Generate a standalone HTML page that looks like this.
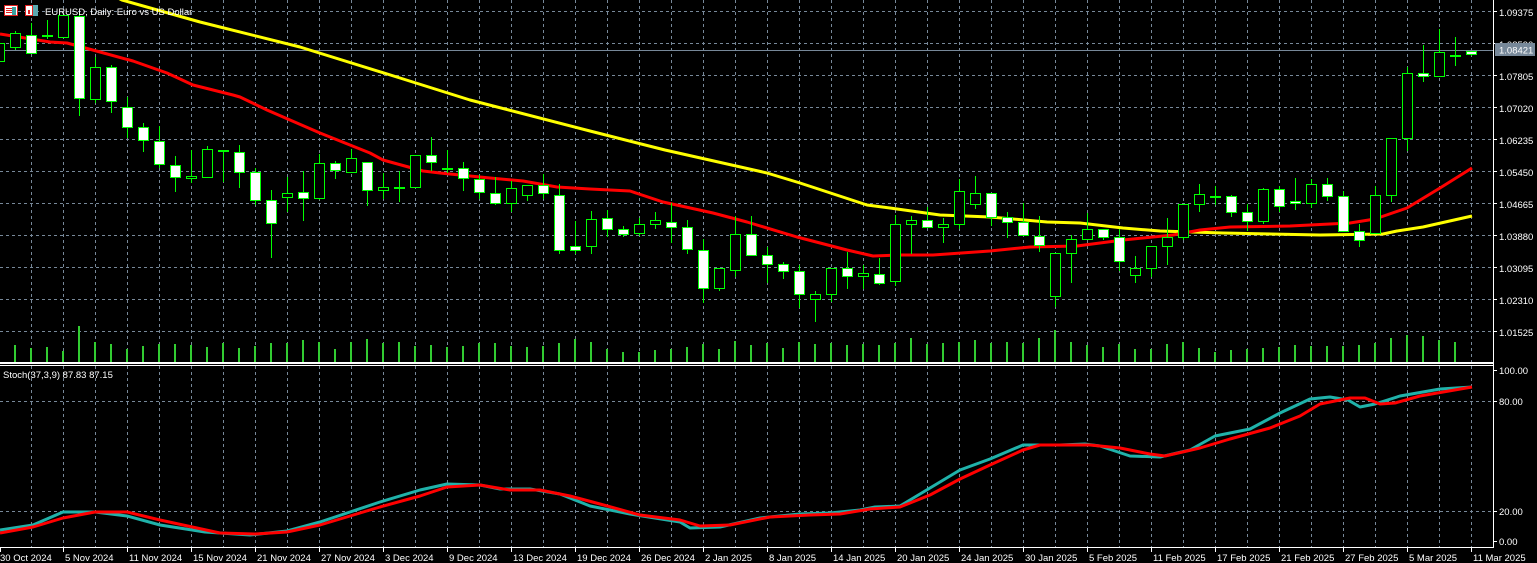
<!DOCTYPE html>
<html><head><meta charset="utf-8"><style>
html,body{margin:0;padding:0;background:#000;width:1537px;height:563px;overflow:hidden}
svg{display:block}
text{font-family:"Liberation Sans",sans-serif;fill:#fff}
</style></head><body>
<svg width="1537" height="563" viewBox="0 0 1537 563" xmlns="http://www.w3.org/2000/svg" shape-rendering="crispEdges">
<rect width="1537" height="563" fill="#000"/>
<!-- vertical grid -->
<g stroke="#778899" stroke-width="1" stroke-dasharray="3 3">
<path d="M31.5 0V547M63.5 0V547M95.5 0V547M127.5 0V547M159.5 0V547M191.5 0V547M223.5 0V547M255.5 0V547M287.5 0V547M319.5 0V547M351.5 0V547M383.5 0V547M415.5 0V547M447.5 0V547M479.5 0V547M511.5 0V547M543.5 0V547M575.5 0V547M607.5 0V547M639.5 0V547M671.5 0V547M703.5 0V547M735.5 0V547M767.5 0V547M799.5 0V547M831.5 0V547M863.5 0V547M895.5 0V547M927.5 0V547M959.5 0V547M991.5 0V547M1023.5 0V547M1055.5 0V547M1087.5 0V547M1119.5 0V547M1151.5 0V547M1183.5 0V547M1215.5 0V547M1247.5 0V547M1279.5 0V547M1311.5 0V547M1343.5 0V547M1375.5 0V547M1407.5 0V547M1439.5 0V547M1471.5 0V547"/>
<path d="M0 11.5H1493M0 43.5H1493M0 75.5H1493M0 107.5H1493M0 139.5H1493M0 171.5H1493M0 203.5H1493M0 235.5H1493M0 267.5H1493M0 299.5H1493M0 331.5H1493M0 401.5H1493M0 511.5H1493"/>
</g>
<!-- current price line -->
<path d="M0 50.5H1493" stroke="#778899" stroke-width="1"/>
<!-- volumes -->
<path stroke="#32CD32" stroke-width="2" d="M15 345V362M31 348V362M47 347V362M63 351V362M79 326V362M95 342V362M111 344V362M127 349V362M143 346V362M159 344V362M175 344V362M191 345V362M207 347V362M223 343V362M239 348V362M255 346V362M271 343V362M287 343V362M303 340V362M319 342V362M335 349V362M351 342V362M367 339V362M383 343V362M399 342V362M415 346V362M431 345V362M447 347V362M463 346V362M479 343V362M495 343V362M511 346V362M527 347V362M543 346V362M559 343V362M575 339V362M591 342V362M607 349V362M623 352V362M639 352V362M655 350V362M671 349V362M687 347V362M703 344V362M719 349V362M735 341V362M751 345V362M767 343V362M783 348V362M799 342V362M815 344V362M831 343V362M847 345V362M863 344V362M879 345V362M895 343V362M911 338V362M927 344V362M943 343V362M959 342V362M975 340V362M991 343V362M1007 342V362M1023 343V362M1039 338V362M1055 330V362M1071 342V362M1087 345V362M1103 347V362M1119 344V362M1135 349V362M1151 349V362M1167 344V362M1183 342V362M1199 348V362M1215 352V362M1231 350V362M1247 349V362M1263 348V362M1279 347V362M1295 345V362M1311 346V362M1327 346V362M1343 346V362M1359 345V362M1375 343V362M1391 338V362M1407 335V362M1423 336V362M1439 340V362M1455 342V362"/>
<!-- MAs -->
<g fill="none" stroke-width="3" shape-rendering="auto" stroke-linejoin="round">
<polyline stroke="#FFFF00" points="118,-2 122,0 200,22 300,47 400,78 470,100 590,131 665,150 767,173 800,183 867,205 890,208 940,215 990,217 1047,222 1080,223 1123,228 1160,231 1223,233 1320,235 1383,234 1397,231 1423,227 1472,216"/>
<polyline stroke="#FF0000" points="0,34 50,42 67,43 100,52 133,61 167,73 193,85 233,95 240,97 267,110 290,120 320,133 370,153 383,160 423,171 440,173 490,178 523,181 557,187 590,189 630,191 663,202 713,213 747,222 797,237 847,250 873,256 900,255 933,255 990,251 1030,247 1077,246 1123,240 1173,235 1200,230 1230,227 1290,226 1350,223 1375,219 1407,208 1440,188 1472,168"/>
</g>
<!-- wicks -->
<path stroke="#00FF00" stroke-width="1" d="M-0.5 41V63M15.5 31V50M31.5 23V53M47.5 20V39M63.5 15V38M79.5 12V116M95.5 57V103M111.5 65V113M127.5 97V138M143.5 123V152M159.5 126V168M175.5 156V192M191.5 150V183M207.5 146V178M223.5 150V182M239.5 145V188M255.5 168V205M271.5 190V258M287.5 177V212M303.5 171V221M319.5 154V200M335.5 161V179M351.5 149V172M367.5 162V206M383.5 173V199M399.5 171V202M415.5 155V187M431.5 137V171M447.5 150V173M463.5 162V191M479.5 175V199M495.5 177V205M511.5 181V212M527.5 185V201M543.5 174V199M559.5 184V254M575.5 221V254M591.5 211V254M607.5 210V237M623.5 226V237M639.5 218V236M655.5 212V229M671.5 203V243M687.5 220V254M703.5 239V303M719.5 268V291M735.5 216V277M751.5 216V255M767.5 247V283M783.5 262V279M799.5 265V308M815.5 291V322M831.5 268V302M847.5 252V289M863.5 265V289M879.5 258V285M895.5 215V286M911.5 216V254M927.5 207V227M943.5 218V243M959.5 179V229M975.5 176V209M991.5 193V226M1007.5 212V238M1023.5 203V235M1039.5 216V252M1055.5 253V307M1071.5 235V283M1087.5 213V239M1103.5 229V240M1119.5 229V271M1135.5 256V283M1151.5 246V277M1167.5 218V265M1183.5 204V240M1199.5 184V212M1215.5 186V205M1231.5 195V217M1247.5 204V231M1263.5 188V224M1279.5 186V212M1295.5 178V210M1311.5 179V208M1327.5 178V201M1343.5 191V231M1359.5 224V247M1375.5 186V233M1391.5 138V202M1407.5 67V151M1423.5 45V82M1439.5 29V76M1455.5 37V66M1471.5 51V56"/>
<!-- bodies -->
<g stroke="#00FF00" stroke-width="1">
<g fill="#000">
<rect x="-5.5" y="43.5" width="10" height="18"/><rect x="10.5" y="33.5" width="10" height="14"/><rect x="42.5" y="35.5" width="10" height="1"/><rect x="58.5" y="15.5" width="10" height="22"/><rect x="90.5" y="67.5" width="10" height="32"/><rect x="186.5" y="176.5" width="10" height="2"/><rect x="202.5" y="149.5" width="10" height="28"/><rect x="282.5" y="193.5" width="10" height="4"/><rect x="314.5" y="163.5" width="10" height="35"/><rect x="346.5" y="158.5" width="10" height="14"/><rect x="378.5" y="187.5" width="10" height="3"/><rect x="394.5" y="187.5" width="10" height="1"/><rect x="410.5" y="155.5" width="10" height="32"/><rect x="442.5" y="168.5" width="10" height="1"/><rect x="506.5" y="188.5" width="10" height="15"/><rect x="522.5" y="185.5" width="10" height="10"/><rect x="586.5" y="219.5" width="10" height="27"/><rect x="634.5" y="224.5" width="10" height="9"/><rect x="650.5" y="220.5" width="10" height="4"/><rect x="714.5" y="268.5" width="10" height="20"/><rect x="730.5" y="234.5" width="10" height="36"/><rect x="810.5" y="294.5" width="10" height="5"/><rect x="826.5" y="268.5" width="10" height="26"/><rect x="858.5" y="273.5" width="10" height="3"/><rect x="890.5" y="224.5" width="10" height="57"/><rect x="906.5" y="220.5" width="10" height="4"/><rect x="938.5" y="224.5" width="10" height="3"/><rect x="954.5" y="191.5" width="10" height="33"/><rect x="970.5" y="193.5" width="10" height="11"/><rect x="1050.5" y="253.5" width="10" height="43"/><rect x="1066.5" y="239.5" width="10" height="14"/><rect x="1082.5" y="229.5" width="10" height="10"/><rect x="1130.5" y="268.5" width="10" height="7"/><rect x="1146.5" y="246.5" width="10" height="22"/><rect x="1162.5" y="237.5" width="10" height="9"/><rect x="1178.5" y="204.5" width="10" height="33"/><rect x="1194.5" y="194.5" width="10" height="10"/><rect x="1210.5" y="196.5" width="10" height="1"/><rect x="1258.5" y="189.5" width="10" height="32"/><rect x="1306.5" y="184.5" width="10" height="19"/><rect x="1370.5" y="195.5" width="10" height="38"/><rect x="1386.5" y="138.5" width="10" height="57"/><rect x="1402.5" y="73.5" width="10" height="65"/><rect x="1434.5" y="52.5" width="10" height="24"/><rect x="1450.5" y="55.5" width="10" height="1"/>
</g>
<g fill="#fff">
<rect x="26.5" y="35.5" width="10" height="18"/><rect x="74.5" y="16.5" width="10" height="82"/><rect x="106.5" y="67.5" width="10" height="34"/><rect x="122.5" y="107.5" width="10" height="20"/><rect x="138.5" y="127.5" width="10" height="13"/><rect x="154.5" y="141.5" width="10" height="23"/><rect x="170.5" y="165.5" width="10" height="12"/><rect x="218.5" y="150.5" width="10" height="1"/><rect x="234.5" y="152.5" width="10" height="20"/><rect x="250.5" y="172.5" width="10" height="28"/><rect x="266.5" y="200.5" width="10" height="23"/><rect x="298.5" y="192.5" width="10" height="6"/><rect x="330.5" y="163.5" width="10" height="7"/><rect x="362.5" y="162.5" width="10" height="28"/><rect x="426.5" y="155.5" width="10" height="7"/><rect x="458.5" y="168.5" width="10" height="10"/><rect x="474.5" y="179.5" width="10" height="13"/><rect x="490.5" y="193.5" width="10" height="10"/><rect x="538.5" y="185.5" width="10" height="8"/><rect x="554.5" y="195.5" width="10" height="55"/><rect x="570.5" y="246.5" width="10" height="4"/><rect x="602.5" y="218.5" width="10" height="11"/><rect x="618.5" y="229.5" width="10" height="5"/><rect x="666.5" y="222.5" width="10" height="5"/><rect x="682.5" y="227.5" width="10" height="22"/><rect x="698.5" y="250.5" width="10" height="38"/><rect x="746.5" y="234.5" width="10" height="21"/><rect x="762.5" y="255.5" width="10" height="9"/><rect x="778.5" y="264.5" width="10" height="7"/><rect x="794.5" y="271.5" width="10" height="23"/><rect x="842.5" y="268.5" width="10" height="8"/><rect x="874.5" y="274.5" width="10" height="9"/><rect x="922.5" y="220.5" width="10" height="7"/><rect x="986.5" y="193.5" width="10" height="24"/><rect x="1002.5" y="217.5" width="10" height="5"/><rect x="1018.5" y="222.5" width="10" height="13"/><rect x="1034.5" y="236.5" width="10" height="9"/><rect x="1098.5" y="229.5" width="10" height="8"/><rect x="1114.5" y="237.5" width="10" height="24"/><rect x="1226.5" y="196.5" width="10" height="16"/><rect x="1242.5" y="212.5" width="10" height="9"/><rect x="1274.5" y="189.5" width="10" height="17"/><rect x="1290.5" y="201.5" width="10" height="2"/><rect x="1322.5" y="184.5" width="10" height="12"/><rect x="1338.5" y="196.5" width="10" height="35"/><rect x="1354.5" y="231.5" width="10" height="9"/><rect x="1418.5" y="73.5" width="10" height="3"/><rect x="1466.5" y="51.5" width="10" height="3"/>
</g></g>
<!-- panel separators / axes -->
<rect x="0" y="362" width="1494" height="2" fill="#fff"/>
<rect x="0" y="365" width="1494" height="1" fill="#fff"/>
<rect x="1493" y="0" width="1" height="548" fill="#fff"/>
<rect x="0" y="547" width="1494" height="1" fill="#fff"/>
<!-- stochastic -->
<g fill="none" stroke-width="3" shape-rendering="auto" stroke-linejoin="round">
<polyline stroke="#20B2AA" points="0,530 33,525 63,512 95,512 127,516 160,525 205,532 250,535 287,531 320,522 350,512 380,502 420,490 447,484 480,485 500,489 530,489 560,494 590,506 630,514 680,522 690,528 720,527 760,518 800,514 830,513 860,510 875,507 900,506 930,488 960,470 990,459 1023,445 1060,445 1085,444 1100,446 1130,456 1160,457 1190,450 1215,436 1250,429 1280,413 1310,399 1330,397 1348,400 1360,407 1375,404 1400,396 1440,389 1472,387"/>
<polyline stroke="#FF0000" points="0,533 33,527 63,518 95,512 127,512 160,520 220,533 255,534 287,532 320,525 350,516 380,507 420,496 447,487 480,485 510,490 540,490 570,496 600,504 640,515 680,520 700,526 730,525 770,517 810,515 840,514 870,509 900,507 930,495 960,479 990,465 1023,450 1040,445 1090,445 1120,448 1150,454 1165,456 1200,448 1230,439 1270,428 1300,416 1320,404 1350,398 1365,398 1380,404 1395,403 1420,396 1472,387"/>
</g>
<!-- axis ticks -->
<path stroke="#fff" stroke-width="1" d="M1493 11.5H1497M1493 43.5H1497M1493 75.5H1497M1493 107.5H1497M1493 139.5H1497M1493 171.5H1497M1493 203.5H1497M1493 235.5H1497M1493 267.5H1497M1493 299.5H1497M1493 331.5H1497M1493 370.5H1497M1493 401.5H1497M1493 511.5H1497M1493 541.5H1497M0.5 547V552M63.5 547V552M127.5 547V552M191.5 547V552M255.5 547V552M319.5 547V552M383.5 547V552M447.5 547V552M511.5 547V552M575.5 547V552M639.5 547V552M703.5 547V552M767.5 547V552M831.5 547V552M895.5 547V552M959.5 547V552M1023.5 547V552M1087.5 547V552M1151.5 547V552M1215.5 547V552M1279.5 547V552M1343.5 547V552M1407.5 547V552M1471.5 547V552"/>
<g font-size="9.5" shape-rendering="auto">
<text x="1499" y="16">1.09375</text>
<text x="1499" y="48">1.08590</text>
<text x="1499" y="80">1.07805</text>
<text x="1499" y="112">1.07020</text>
<text x="1499" y="144">1.06235</text>
<text x="1499" y="176">1.05450</text>
<text x="1499" y="208">1.04665</text>
<text x="1499" y="240">1.03880</text>
<text x="1499" y="272">1.03095</text>
<text x="1499" y="304">1.02310</text>
<text x="1499" y="336">1.01525</text>
<rect x="1495" y="43" width="40" height="13" fill="#778899"/>
<text x="1499" y="53.5">1.08421</text>
<text x="1499" y="374">100.00</text>
<text x="1499" y="405">80.00</text>
<text x="1499" y="515">20.00</text>
<text x="1499" y="545">0.00</text>
<text x="0" y="561">30 Oct 2024</text>
<text x="65" y="561">5 Nov 2024</text>
<text x="129" y="561">11 Nov 2024</text>
<text x="193" y="561">15 Nov 2024</text>
<text x="257" y="561">21 Nov 2024</text>
<text x="321" y="561">27 Nov 2024</text>
<text x="385" y="561">3 Dec 2024</text>
<text x="449" y="561">9 Dec 2024</text>
<text x="513" y="561">13 Dec 2024</text>
<text x="577" y="561">19 Dec 2024</text>
<text x="641" y="561">26 Dec 2024</text>
<text x="705" y="561">2 Jan 2025</text>
<text x="769" y="561">8 Jan 2025</text>
<text x="833" y="561">14 Jan 2025</text>
<text x="897" y="561">20 Jan 2025</text>
<text x="961" y="561">24 Jan 2025</text>
<text x="1025" y="561">30 Jan 2025</text>
<text x="1089" y="561">5 Feb 2025</text>
<text x="1153" y="561">11 Feb 2025</text>
<text x="1217" y="561">17 Feb 2025</text>
<text x="1281" y="561">21 Feb 2025</text>
<text x="1345" y="561">27 Feb 2025</text>
<text x="1409" y="561">5 Mar 2025</text>
<text x="1473" y="561">11 Mar 2025</text>
<text x="3" y="378">Stoch(37,3,9) 87.83 87.15</text>
<text x="45" y="15">EURUSD, Daily:  Euro vs US Dollar</text>
</g>
<!-- title icons -->
<rect x="4.5" y="5.5" width="13" height="10" fill="#fff" stroke="#e02020"/>
<path d="M6 8.5H12M6 10.5H12M6 12.5H12" stroke="#e02020"/>
<rect x="12" y="7" width="4" height="8" fill="#3aa0a0"/>
<rect x="25.5" y="5.5" width="7" height="10" fill="#fff" stroke="#e02020"/>
<rect x="33" y="5" width="5" height="11" fill="#5aa8b0"/>
<rect x="28" y="10" width="2" height="4" fill="#e02020"/>
</svg>
</body></html>
